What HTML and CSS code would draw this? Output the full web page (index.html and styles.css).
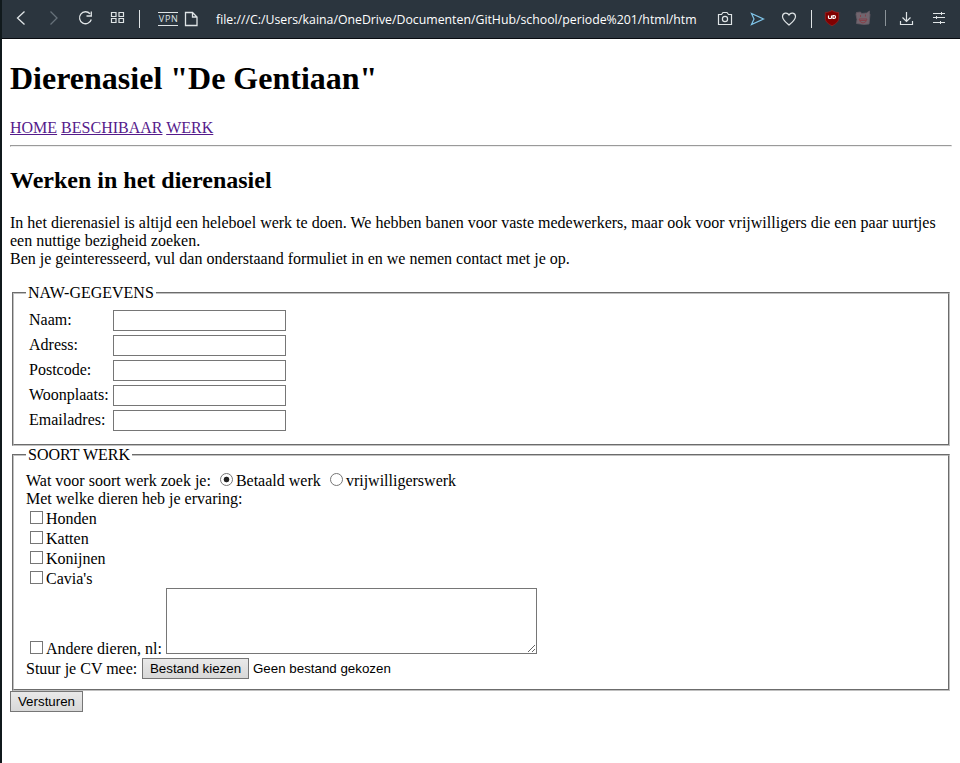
FILE: index.html
```html
<!DOCTYPE html>
<html lang="nl">
<head>
<meta charset="utf-8">
<title>Dierenasiel "De Gentiaan"</title>
<link rel="stylesheet" href="styles.css">
</head>
<body>
<div class="window">
<header class="toolbar">
  <svg class="icons-left" width="214" height="38" viewBox="0 0 214 38" fill="none" stroke="#dfe4e6" stroke-width="1.3">
    <path d="M22.500 11.500L15.500 18L22.500 24.500"/>
    <path d="M48.500 11.500L55 18L48.500 24.500" stroke="#66717a"/>
    <path d="M88 13.700A6 6 0 1 0 89.300 19.500M89.300 11.500V16H84.500"/>
    <path d="M109.500 12.500h4.500v4h-4.500zM117 12.500h4.500v4h-4.500zM109.500 18.500h4.500v4h-4.500zM117 18.500h4.500v4h-4.500z" stroke-width="1.200"/>
    <path d="M137.500 10V28" stroke-width="1"/>
    <path d="M156 12.500h20M156 25.500h20" stroke-width="1"/>
    <text class="vpn" x="156.800" y="22" textLength="19">VPN</text>
    <path d="M183.500 12.500h7l4.500 4.500v8.500h-11.500zM190.500 12.500v4.500h4.500"/>
  </svg>
  <div class="address">file:///C:/Users/kaina/OneDrive/Documenten/GitHub/school/periode%201/html/htm</div>
  <svg class="icons-right" width="260" height="38" viewBox="700 0 260 38" fill="none" stroke="#dfe4e6" stroke-width="1.2">
    <path d="M718.500 14.500h3l1.500-2h4l1.500 2h3v10h-13z"/><circle cx="725" cy="19" r="2.600"/>
    <path d="M751.500 13.500L763.500 19L751.500 24.500L754 19Z" stroke="#80c6eb"/>
    <path d="M789 25C786 22.500 782.500 20 782.500 16.500C782.500 12.500 787.500 12 789 15C790.500 12 795.500 12.500 795.500 16.500C795.500 20 792 22.500 789 25Z"/>
    <path d="M811.500 10V28" stroke-width="1"/>
    <path d="M832 10.500C829.500 12 827.500 12.500 825.300 12.500V18C825.300 22 828.500 24 832 25.800C835.500 24 838.700 22 838.700 18V12.500C836.500 12.500 834.500 12 832 10.500Z" fill="#800000" stroke="#982020" stroke-width=".8"/>
    <path d="M828.500 15.500v2q0 1 1 1h1q1 0 1-1V15.500M833 15.500v3h1a1.500 1.500 0 0 0 0-3z" stroke="#fff"/>
    <path d="M856.500 12.500l4-.5 1 1.500 5-.5 3-2v3l.5.500-1 9.500-5 .5-7.500-1 .5-4-1-5z" fill="#71656e" stroke="#655b64" stroke-width=".8"/>
    <path d="M860.500 15v2M865.500 14.500v2M859 19h8q-1 4-4 4-3 0-4-4zM860 20.500h6" stroke="#85414a" stroke-width="1"/>
    <path d="M885.500 10V26" stroke="#8b9399" stroke-width="1"/>
    <path d="M906.500 12v9M902.500 17.500l4 4 4-4M900.500 21v3.500h12V21"/>
    <path d="M933 13.500h12M933 17.500h12M933 22.500h12M941.500 12v3M936.500 16v3M940.500 21v3" stroke-width="1"/>
  </svg>
</header>
<main>
  <h1>Dierenasiel "De Gentiaan"</h1>
  <nav><a href="#">HOME</a> <a href="#">BESCHIBAAR</a> <a href="#">WERK</a></nav>
  <hr>
  <h2>Werken in het dierenasiel</h2>
  <p>In het dierenasiel is altijd een heleboel werk te doen. We hebben banen voor vaste medewerkers, maar ook voor vrijwilligers die een paar uurtjes een nuttige bezigheid zoeken.<br>Ben je geinteresseerd, vul dan onderstaand formuliet in en we nemen contact met je op.</p>
  <form>
    <fieldset class="details">
      <legend>NAW-GEGEVENS</legend>
      <div class="fields">
        <label for="naam">Naam:</label><input id="naam" type="text">
        <label for="adres">Adress:</label><input id="adres" type="text">
        <label for="postcode">Postcode:</label><input id="postcode" type="text">
        <label for="plaats">Woonplaats:</label><input id="plaats" type="text">
        <label for="email">Emailadres:</label><input id="email" type="text">
      </div>
    </fieldset>
    <fieldset class="work">
      <legend>SOORT WERK</legend>
      <div class="line">Wat voor soort werk zoek je: <label class="paid"><input type="radio" name="werk" checked>Betaald werk</label><label class="volunteer"><input type="radio" name="werk">vrijwilligerswerk</label></div>
      <div class="line">Met welke dieren heb je ervaring:</div>
      <label class="animal"><input type="checkbox">Honden</label>
      <label class="animal"><input type="checkbox">Katten</label>
      <label class="animal"><input type="checkbox">Konijnen</label>
      <label class="animal"><input type="checkbox">Cavia's</label>
      <div class="other"><label class="animal"><input type="checkbox">Andere dieren, nl:</label><textarea></textarea></div>
      <div class="upload"><span class="upload-label">Stuur je CV mee:</span><button type="button" class="choose">Bestand kiezen</button><span class="file-name">Geen bestand gekozen</span></div>
    </fieldset>
    <button type="button" class="submit">Versturen</button>
  </form>
</main>
</div>
</body>
</html>
```
FILE: styles.css
```css
* { box-sizing: border-box; }
body {
  margin: 0;
  background: #fff;
  color: #000;
  font: 16px/18px "Liberation Serif", "Times New Roman", serif;
}
.window {
  height: 763px;
  overflow: hidden;
  border-left: 2px solid #10191c;
}
.toolbar {
  display: flex;
  height: 39px;
  background: #2b353e;
  border-bottom: 1px solid #080b10;
}
.toolbar svg { flex: none; display: block; }
.vpn {
  font: 9px "Open Sans", sans-serif;
  fill: #dfe4e6;
  stroke: none;
}
.address {
  width: 484px;
  flex: none;
  white-space: nowrap;
  color: #fff;
  font: 12.3px/40px "Open Sans", sans-serif;
}
main { padding: 0 8px; }
h1 { margin: 21px 0 22px; font-size: 32px; line-height: 37px; }
nav { height: 18px; }
a { color: #551a8b; }
hr { height: 2px; margin: 8px 0 20px; border: solid; border-width: 1px; border-color: #9a9a9a #eee #eee #9a9a9a; }
h2 { margin: 0 0 20px; font-size: 24px; line-height: 27px; }
p { margin: 0 0 16px; }
fieldset {
  margin: 0 2px;
  padding: 8px 12px 0;
  border: 2px groove #c0c0c0;
}
legend { padding: 0 2px; height: 18px; }
.details { height: 162px; }
.work { height: 245px; }
.fields {
  display: grid;
  grid-template-columns: 80px 173px;
  grid-auto-rows: 21px;
  gap: 4px;
  padding-left: 3px;
}
.fields label { line-height: 20px; white-space: nowrap; }
input, textarea { margin: 0; border: 1px solid #767676; border-radius: 0; background: #fff; }
.fields input { width: 173px; height: 21px; }
.line { height: 18px; display: flex; white-space: pre; }
.line label { display: flex; }
.paid { margin-left: 5px; width: 110px; }
.line input, .animal input {
  appearance: none;
  flex: none;
  width: 13px;
  height: 13px;
}
.line input { margin: 1px 3px 0 0; border-radius: 50%; }
.line input:checked { background: radial-gradient(circle, #222 0 2.5px, #fff 3.2px); }
.animal {
  display: flex;
  height: 20px;
  padding: 2px 0 0 4px;
  white-space: nowrap;
}
.animal input { margin: 1px 3px 0 0; }
.other { display: flex; height: 70px; }
.other .animal { width: 140px; margin-top: 50px; }
textarea { width: 371px; height: 66px; resize: both; }
.upload { display: flex; height: 21px; }
.upload-label { width: 116px; line-height: 21px; }
button {
  height: 21px;
  margin: 0;
  padding: 0;
  border: 1px solid #767676;
  border-radius: 0;
  background: linear-gradient(#e9e9e9, #d8d8d8);
  color: #000;
  font: 13.333px/19px "Liberation Sans", Arial, sans-serif;
}
.choose { width: 107px; }
.file-name { margin-left: 4px; font: 13.333px/21px "Liberation Sans", Arial, sans-serif; }
.submit { display: block; width: 73px; }
```
